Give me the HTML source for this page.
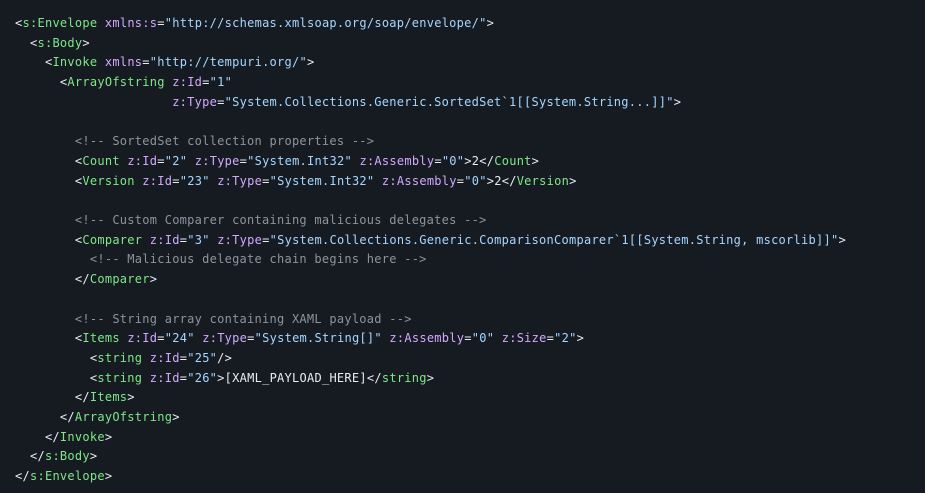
<!DOCTYPE html>
<html><head><meta charset="utf-8"><style>
html,body{margin:0;padding:0;background:#161b22;width:925px;height:493px;overflow:hidden}
pre{margin:0;padding:14px 0 0 15px;font-family:"DejaVu Sans Mono","Liberation Mono",monospace;font-size:12px;letter-spacing:0.26px;line-height:19.7px;color:#e6edf3;white-space:pre}
.t{color:#7ee787}.a{color:#d2a8ff}.s{color:#a5d6ff}.c{color:#8b949e}
</style></head><body><pre>&lt;<span class="t">s:Envelope</span> <span class="a">xmlns:s</span>=<span class="s">"http://schemas.xmlsoap.org/soap/envelope/"</span>&gt;
  &lt;<span class="t">s:Body</span>&gt;
    &lt;<span class="t">Invoke</span> <span class="a">xmlns</span>=<span class="s">"http://tempuri.org/"</span>&gt;
      &lt;<span class="t">ArrayOfstring</span> <span class="a">z:Id</span>=<span class="s">"1"</span>
                     <span class="a">z:Type</span>=<span class="s">"System.Collections.Generic.SortedSet`1[[System.String...]]"</span>&gt;

        <span class="c">&lt;!-- SortedSet collection properties --&gt;</span>
        &lt;<span class="t">Count</span> <span class="a">z:Id</span>=<span class="s">"2"</span> <span class="a">z:Type</span>=<span class="s">"System.Int32"</span> <span class="a">z:Assembly</span>=<span class="s">"0"</span>&gt;2&lt;/<span class="t">Count</span>&gt;
        &lt;<span class="t">Version</span> <span class="a">z:Id</span>=<span class="s">"23"</span> <span class="a">z:Type</span>=<span class="s">"System.Int32"</span> <span class="a">z:Assembly</span>=<span class="s">"0"</span>&gt;2&lt;/<span class="t">Version</span>&gt;

        <span class="c">&lt;!-- Custom Comparer containing malicious delegates --&gt;</span>
        &lt;<span class="t">Comparer</span> <span class="a">z:Id</span>=<span class="s">"3"</span> <span class="a">z:Type</span>=<span class="s">"System.Collections.Generic.ComparisonComparer`1[[System.String, mscorlib]]"</span>&gt;
          <span class="c">&lt;!-- Malicious delegate chain begins here --&gt;</span>
        &lt;/<span class="t">Comparer</span>&gt;

        <span class="c">&lt;!-- String array containing XAML payload --&gt;</span>
        &lt;<span class="t">Items</span> <span class="a">z:Id</span>=<span class="s">"24"</span> <span class="a">z:Type</span>=<span class="s">"System.String[]"</span> <span class="a">z:Assembly</span>=<span class="s">"0"</span> <span class="a">z:Size</span>=<span class="s">"2"</span>&gt;
          &lt;<span class="t">string</span> <span class="a">z:Id</span>=<span class="s">"25"</span>/&gt;
          &lt;<span class="t">string</span> <span class="a">z:Id</span>=<span class="s">"26"</span>&gt;[XAML_PAYLOAD_HERE]&lt;/<span class="t">string</span>&gt;
        &lt;/<span class="t">Items</span>&gt;
      &lt;/<span class="t">ArrayOfstring</span>&gt;
    &lt;/<span class="t">Invoke</span>&gt;
  &lt;/<span class="t">s:Body</span>&gt;
&lt;/<span class="t">s:Envelope</span>&gt;</pre></body></html>
